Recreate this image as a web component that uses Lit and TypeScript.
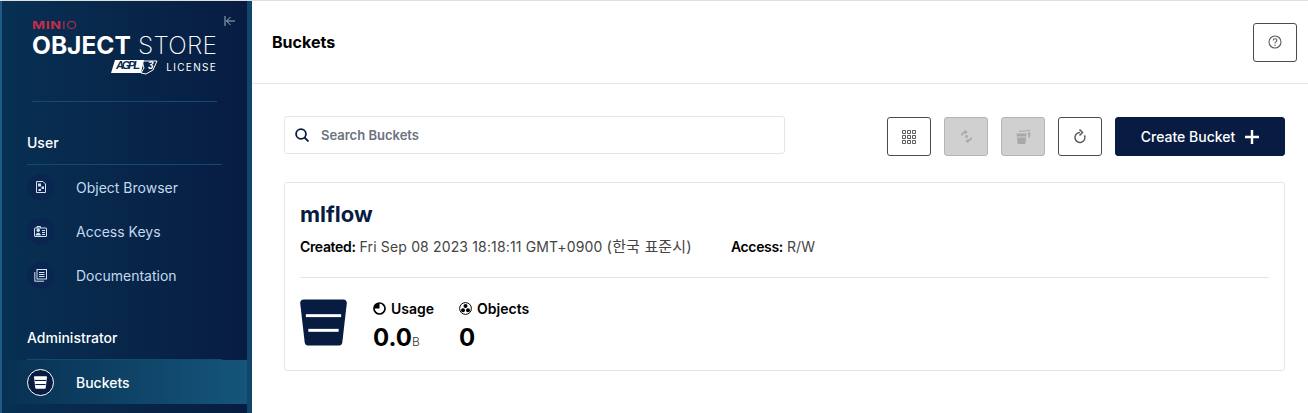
import { LitElement, css, html, svg } from 'lit'
import { customElement } from 'lit/decorators.js'

const bucketShape = svg`<path d="M4 0h40c2.500 0 4 1.500 3.800 3.800l-4.600 40.200c-.3 2-1.500 3-3.200 3H8c-1.700 0-2.900-1-3.200-3L.2 3.800C0 1.500 1.500 0 4 0z" fill="currentColor"/>`

const icons = {
  browser: html`<svg viewBox="0 0 10 12" width="10" height="12" fill="none" stroke="currentColor"><path d="M.5.500h6.500l2.500 2.500v8.500h-9z"/><rect x="2" y="2.500" width="3" height="3" fill="currentColor" stroke="none"/><rect x="5.500" y="5.500" width="2.500" height="2.500" fill="currentColor" stroke="none"/><rect x="2.500" y="8" width="2.500" height="2" fill="currentColor" stroke="none"/></svg>`,
  keys: html`<svg viewBox="0 0 13 11" width="13" height="11" fill="none" stroke="currentColor"><rect x=".5" y="2" width="12" height="8.500" rx=".5"/><circle cx="4.200" cy="4.300" r="1.700" fill="currentColor" stroke="none"/><path d="M1.600 9.500c0-3.800 5.200-3.800 5.200 0z" fill="currentColor" stroke="none"/><path d="M8 4.500h3M8 6.500h3M8 8.500h3"/><path d="M3 2V.5h3.500V2"/></svg>`,
  docs: html`<svg viewBox="0 0 13 13" width="13" height="13" fill="none" stroke="currentColor"><rect x="3" y=".5" width="9.500" height="9.500"/><path d="M.8 3v9.200H10M5 3.500h5.500M5 5.500h5.500M5 7.500h5.500"/></svg>`,
  collapse: html`<svg viewBox="0 0 12 12" width="12" height="12" fill="none" stroke="currentColor"><path d="M1 1v10M11 6H2.500M6.500 2 2.500 6l4 4"/></svg>`,
  help: html`<svg viewBox="0 0 14 14" width="14" height="14" fill="none" stroke="currentColor" stroke-width="1.100"><circle cx="7" cy="7" r="6"/><path d="M5.200 5.500C5.300 3 8.900 3.200 8.800 5.400 8.700 6.900 7 6.800 7 8.400"/><circle cx="7" cy="10.200" r=".7" fill="currentColor" stroke="none"/></svg>`,
  search: html`<svg viewBox="0 0 14 14" width="14" height="14" fill="none" stroke="currentColor" stroke-width="1.800"><circle cx="6" cy="6" r="4.900"/><path d="m9.500 9.500 4 4"/></svg>`,
  grid: html`<svg viewBox="0 0 14 14" width="14" height="14" fill="none" stroke="currentColor"><path d="M.5.500h3v3h-3zM5.500.500h3v3h-3zM10.500.500h3v3h-3zM.5 5.500h3v3h-3zM5.500 5.500h3v3h-3zM10.500 5.500h3v3h-3zM.5 10.500h3v3h-3zM5.500 10.500h3v3h-3zM10.500 10.500h3v3h-3z"/></svg>`,
  sync: html`<svg viewBox="0 0 13 13" width="13" height="13" fill="none" stroke="currentColor" stroke-width="1.500"><path d="M1.500 5.500C2 3.500 3.500 2.300 5.500 2M11.500 7.500C11 9.500 9.500 10.700 7.500 11"/><path d="M4.500.5 6.500 2 4.500 3.500M8.500 9.500 6.500 11l2 1.500"/><circle cx="6.500" cy="6.500" r="1.400" fill="currentColor" stroke="none"/></svg>`,
  lifecycle: html`<svg viewBox="0 0 15 14" width="15" height="14" fill="currentColor"><path d="M.5 3.500h10l-1 9.500c0 .6-.4 1-1 1h-6c-.6 0-1-.4-1-1z"/><path d="M3 2V1l11-1v.9zM12 2.500h2.500l-.7 5H12.500z"/><rect x="1" y="6.500" width="9" height="1" fill="#d0d0d0"/></svg>`,
  refresh: html`<svg viewBox="0 0 14 15" width="14" height="15" fill="none" stroke="currentColor" stroke-width="1.500"><path d="M7 3.500a5 5 0 1 0 4.500 2.900"/><path d="M6.500.5 9.500 3.500l-3 3" /></svg>`,
  plus: html`<svg viewBox="0 0 14 14" width="14" height="14" fill="none" stroke="currentColor" stroke-width="2.400"><path d="M7 0v14M0 7h14"/></svg>`,
  usage: html`<svg viewBox="0 0 13 13" width="13" height="13" fill="none" stroke="currentColor" stroke-width="1.700"><circle cx="6.500" cy="6.500" r="5.500"/><path d="M6.500 6.500V1A5.500 5.500 0 0 0 1 6.500z" fill="currentColor" stroke="none"/></svg>`,
  objects: html`<svg viewBox="0 0 13 13" width="13" height="13" fill="currentColor"><circle cx="6.500" cy="6.500" r="5.900" fill="none" stroke="currentColor"/><circle cx="6.500" cy="4" r="2"/><circle cx="4" cy="8.300" r="2"/><circle cx="9" cy="8.300" r="2"/></svg>`,
}

@customElement('side-bar')
class SideBar extends LitElement {
  static styles = css`
    :host {
      display: flex;
      flex-direction: column;
      width: 245px;
      flex: none;
      box-sizing: content-box;
      height: 412px;
      overflow: hidden;
      background: linear-gradient(90deg, #073052 0%, #081c42 100%);
      border-left: 2px solid #1f5c84;
      border-right: 5px solid #11466b;
      color: #fff;
      font-family: Inter, sans-serif;
    }
    .logo {
      position: relative;
      margin: 0 30px;
      padding-top: 18px;
      height: 82px;
      border-bottom: 1px solid #134a72;
    }
    .minio {
      font-size: 10px;
      line-height: 12px;
      font-weight: 700;
      letter-spacing: .5px;
      color: #c72c48;
      transform: scaleX(1.4);
      transform-origin: 0 50%;
    }
    .minio span { font-weight: 300; }
    .product {
      font-size: 24.500px;
      line-height: 26px;
      margin-top: 1px;
      white-space: nowrap;
      font-weight: 200;
      letter-spacing: .25px;
    }
    .product b { font-weight: 700; letter-spacing: 0; }
    .license-row {
      display: flex;
      justify-content: flex-end;
      align-items: center;
      gap: 8px;
      height: 16px;
      margin-top: 1px;
    }
    .license {
      font-size: 10px;
      letter-spacing: 1.300px;
      font-weight: 400;
    }
    .agpl { display: block; }
    .agpl text { font-family: 'Liberation Sans', sans-serif; font-weight: 700; font-style: italic; }
    .collapse {
      position: absolute;
      top: 14px;
      right: -19px;
      color: #9fb2c4;
      line-height: 0;
    }
    .group {
      margin: 29px 25px 0;
      height: 34px;
      box-sizing: border-box;
      font-size: 14px;
      line-height: 24px;
      font-weight: 500;
      border-bottom: 1px solid #134a72;
    }
    .item {
      display: flex;
      align-items: center;
      height: 44px;
      margin-left: -2px;
      padding-left: 27px;
      font-size: 14px;
      color: #c3d9ee;
    }
    .circle {
      display: flex;
      align-items: center;
      justify-content: center;
      box-sizing: border-box;
      width: 27px;
      height: 27px;
      border-radius: 50%;
      background: #0a2650;
      color: #d4e2ee;
      margin-right: 22px;
      flex: none;
    }
    .item.active {
      background: linear-gradient(90deg, #073052 0%, #15557a 100%);
      color: #fff;
      font-weight: 500;
    }
    .item.active .circle {
      background: #081c42;
      border: 1px solid #fff;
      color: #fff;
    }
    .line { fill: #081c42; }
    .group.admin { margin-top: 29px; }
  `
  render() {
    return html`
      <div class="logo">
        <div class="minio">MIN<span>IO</span></div>
        <div class="product"><b>OBJECT</b> STORE</div>
        <div class="license-row">
          <svg class="agpl" width="47" height="16" viewBox="0 0 47 16">
            <path d="M4 1h29l-3 13H0z" fill="#fff"/>
            <text x="5" y="10" font-size="11" textLength="24" fill="#0a2a50">AGPL</text>
            <path d="M31 2h15l-4 9-7 4-5-1 3-5z" fill="none" stroke="#fff"/>
            <text x="37" y="10" font-size="10" fill="#fff">3</text>
          </svg>
          <span class="license">LICENSE</span>
        </div>
        <div class="collapse">${icons.collapse}</div>
      </div>
      <div class="group">User</div>
      <div class="item"><span class="circle">${icons.browser}</span>Object Browser</div>
      <div class="item"><span class="circle">${icons.keys}</span>Access Keys</div>
      <div class="item"><span class="circle">${icons.docs}</span>Documentation</div>
      <div class="group admin">Administrator</div>
      <div class="item active">
        <span class="circle"><svg viewBox="0 0 48 47" width="13" height="13">${bucketShape}
          <rect class="line" x="3" y="14" width="42" height="4"/><rect class="line" x="5" y="29" width="38" height="4"/></svg></span>Buckets
      </div>
    `
  }
}

@customElement('bucket-card')
class BucketCard extends LitElement {
  static styles = css`
    :host {
      display: block;
      box-sizing: border-box;
      height: 189px;
      padding: 15px 15px 0;
      background: #fff;
      border: 1px solid #e5e5e5;
      border-radius: 3px;
      color: #000;
      font-family: Inter, sans-serif;
    }
    .name {
      font-size: 22px;
      line-height: 32px;
      font-weight: 700;
      color: #081c42;
    }
    .meta {
      display: flex;
      gap: 39px;
      margin-top: 7px;
      font-size: 14px;
      line-height: 20px;
      color: #444;
      padding-bottom: 20px;
      border-bottom: 1px solid #e5e5e5;
      letter-spacing: .15px;
    }
    .meta b { font-weight: 600; color: #000; letter-spacing: -.35px; }
    .kr { font-family: Inter, 'Noto Sans CJK KR', sans-serif; font-size: 15px; }
    .stats {
      display: flex;
      margin-top: 21px;
    }
    .bucket { color: #081c42; margin-right: 26px; line-height: 0; flex: none; }
    .line { fill: #fff; }
    .stat { margin-right: 25px; }
    .label {
      display: flex;
      align-items: center;
      gap: 5px;
      height: 18px;
      font-size: 14px;
      font-weight: 600;
    }
    .value {
      font-size: 24px;
      line-height: 30px;
      font-weight: 700;
      margin-top: 6px;
    }
    .value small { font-size: 12px; font-weight: 300; color: #333; }
  `
  render() {
    return html`
      <div class="name">mlflow</div>
      <div class="meta">
        <span><b>Created:</b> Fri Sep 08 2023 18:18:11 GMT+0900 <span class="kr">(한국 표준시)</span></span>
        <span><b>Access:</b> R/W</span>
      </div>
      <div class="stats">
        <svg class="bucket" viewBox="0 0 48 47" width="47" height="47">${bucketShape}
          <rect class="line" x="6" y="15" width="36" height="3"/><rect class="line" x="8.500" y="30" width="31" height="3"/></svg>
        <div class="stat">
          <div class="label">${icons.usage}Usage</div>
          <div class="value">0.0<small>B</small></div>
        </div>
        <div class="stat">
          <div class="label">${icons.objects}Objects</div>
          <div class="value">0</div>
        </div>
      </div>
    `
  }
}

@customElement('app-root')
export class AppRoot extends LitElement {
  static styles = css`
    :host {
      display: flex;
      height: 413px;
      overflow: hidden;
      box-sizing: border-box;
      border-top: 1px solid #e0e0e0;
      background: #fff;
      font-family: Inter, sans-serif;
    }
    main { flex: 1; min-width: 0; }
    header {
      display: flex;
      align-items: center;
      justify-content: space-between;
      box-sizing: border-box;
      height: 83px;
      padding: 0 11px 0 20px;
      border-bottom: 1px solid #e5e5e5;
    }
    h1 { margin: 0; font-size: 16px; font-weight: 700; color: #000; }
    .body { padding: 32px 23px 0 32px; }
    .tools { display: flex; align-items: flex-start; margin-bottom: 26px; }
    .search {
      display: flex;
      align-items: center;
      box-sizing: border-box;
      width: 501px;
      height: 38px;
      padding-left: 10px;
      gap: 12px;
      border: 1px solid #e5e5e5;
      border-radius: 3px;
      color: #081c42;
      font-size: 13px;
      font-weight: 600;
    }
    .search span { color: #6b7280; }
    .actions { display: flex; gap: 13px; margin: 1px 0 0 auto; }
    button {
      display: flex;
      align-items: center;
      justify-content: center;
      box-sizing: border-box;
      width: 44px;
      height: 39px;
      padding: 0;
      background: #fff;
      border: 1px solid #4b4b4b;
      border-radius: 3px;
      color: #5b5b5b;
      font-family: inherit;
    }
    button.off { background: #d0d0d0; border-color: #b5b5b5; color: #a8a8a8; }
    button.create {
      width: 170px;
      gap: 10px;
      background: #081c42;
      border-color: #081c42;
      color: #fff;
      font-size: 14px;
      font-weight: 500;
    }
  `
  render() {
    return html`
      <side-bar></side-bar>
      <main>
        <header>
          <h1>Buckets</h1>
          <button>${icons.help}</button>
        </header>
        <div class="body">
          <div class="tools">
            <div class="search">${icons.search}<span>Search Buckets</span></div>
            <div class="actions">
              <button>${icons.grid}</button>
              <button class="off">${icons.sync}</button>
              <button class="off">${icons.lifecycle}</button>
              <button>${icons.refresh}</button>
              <button class="create">Create Bucket ${icons.plus}</button>
            </div>
          </div>
          <bucket-card></bucket-card>
        </div>
      </main>
    `
  }
}
